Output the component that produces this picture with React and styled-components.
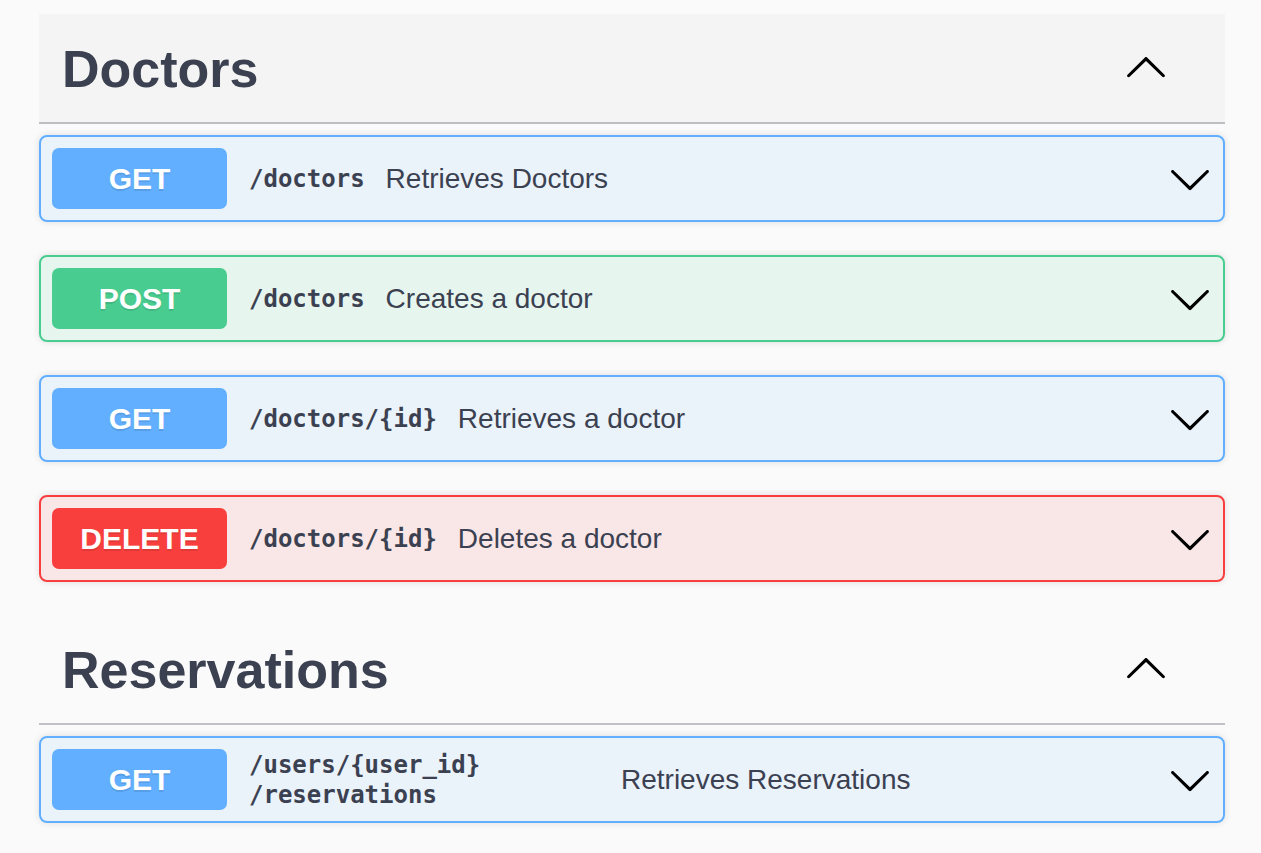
import React from "react";
import styled, { createGlobalStyle } from "styled-components";

const GlobalStyle = createGlobalStyle`
  html, body {
    margin: 0;
    padding: 0;
    background: #fafafa;
  }
  body {
    font-family: "Liberation Sans", Arial, sans-serif;
    color: #3b4151;
  }
`;

const methodColors = {
  GET: { main: "#61affe", bg: "rgba(97, 175, 254, 0.1)" },
  POST: { main: "#49cc90", bg: "rgba(73, 204, 144, 0.1)" },
  DELETE: { main: "#f93e3e", bg: "rgba(249, 62, 62, 0.1)" },
};

const Wrapper = styled.div`
  padding: 14px 36px 0 39px;
`;

const TagSection = styled.section`
  & + & {
    margin-top: 1px;
  }
`;

const TagHeader = styled.div`
  display: flex;
  align-items: center;
  height: 66px;
  padding: 22px 57px 20px 23px;
  border-bottom: 2px solid rgba(59, 65, 81, 0.3);
  background: ${(p) => (p.$hover ? "#f4f4f4" : "transparent")};
  margin-bottom: 11px;
`;

const TagTitle = styled.h3`
  flex: 1;
  margin: 0;
  font-size: 52px;
  font-weight: 700;
  line-height: 66px;
  color: #3b4151;
`;

const ArrowButton = styled.button`
  display: flex;
  align-items: center;
  justify-content: center;
  border: none;
  background: none;
  padding: 0;
  cursor: pointer;
  margin-top: ${(p) => p.$offset || 0}px;
`;

const Opblock = styled.div`
  display: flex;
  align-items: center;
  padding: 11px;
  margin-bottom: 33px;
  border: 2px solid ${(p) => methodColors[p.$method].main};
  border-radius: 8px;
  background: ${(p) => methodColors[p.$method].bg};
  box-shadow: 0 0 7px rgba(0, 0, 0, 0.12);
`;

const Method = styled.span`
  flex-shrink: 0;
  width: 175px;
  height: 61px;
  display: flex;
  align-items: center;
  justify-content: center;
  border-radius: 7px;
  background: ${(p) => methodColors[p.$method].main};
  color: #fff;
  font-size: 30px;
  font-weight: 700;
  text-shadow: 0 2px 0 rgba(0, 0, 0, 0.1);
`;

const Path = styled.span`
  max-width: 351px;
  margin-left: 22px;
  font-family: "DejaVu Sans Mono", "Liberation Mono", monospace;
  font-size: 24px;
  font-weight: 700;
  line-height: 30px;
  color: #3b4151;
`;

const Summary = styled.span`
  flex: 1;
  margin-left: 21px;
  font-size: 28px;
  line-height: 34px;
  color: #3b4151;
`;

const ChevronDown = () => (
  <svg width="44" height="44" viewBox="0 0 20 20" fill="#000">
    <path d="M17.418 6.109c.272-.268.709-.268.979 0s.271.701 0 .969l-7.908 7.83c-.27.268-.707.268-.979 0l-7.908-7.830c-.27-.268-.27-.701 0-.969.271-.268.709-.268.979 0L10 13.25l7.418-7.141z" />
  </svg>
);

const ChevronUp = () => (
  <svg width="44" height="44" viewBox="0 0 20 20" fill="#000">
    <path d="M17.418 14.908c.272.268.709.268.979 0s.271-.701 0-.969l-7.908-7.83c-.27-.268-.707-.268-.979 0l-7.908 7.83c-.27.268-.27.701 0 .969.271.268.709.268.979 0L10 7.767l7.418 7.141z" />
  </svg>
);

const tags = [
  {
    name: "Doctors",
    hover: true,
    ops: [
      { method: "GET", path: "/doctors", summary: "Retrieves Doctors" },
      { method: "POST", path: "/doctors", summary: "Creates a doctor" },
      { method: "GET", path: "/doctors/{id}", summary: "Retrieves a doctor" },
      { method: "DELETE", path: "/doctors/{id}", summary: "Deletes a doctor" },
    ],
  },
  {
    name: "Reservations",
    ops: [
      {
        method: "GET",
        path: "/users/{user_id}/reservations",
        summary: "Retrieves Reservations",
      },
    ],
  },
];

// a <wbr> before each slash so long paths break there
function renderPath(path) {
  const parts = path.split("/").filter(Boolean);
  return parts.map((part, i) => (
    <React.Fragment key={i}>
      {i > 0 && <wbr />}/{part}
    </React.Fragment>
  ));
}

function Operation({ op }) {
  return (
    <Opblock $method={op.method}>
      <Method $method={op.method}>{op.method}</Method>
      <Path>{renderPath(op.path)}</Path>
      <Summary>{op.summary}</Summary>
      <ArrowButton>
        <ChevronDown />
      </ArrowButton>
    </Opblock>
  );
}

export default function App() {
  return (
    <>
      <GlobalStyle />
      <Wrapper>
        {tags.map((tag) => (
          <TagSection key={tag.name}>
            <TagHeader $hover={tag.hover}>
              <TagTitle>{tag.name}</TagTitle>
              <ArrowButton $offset={-6}>
                <ChevronUp />
              </ArrowButton>
            </TagHeader>
            {tag.ops.map((op, i) => (
              <Operation key={i} op={op} />
            ))}
          </TagSection>
        ))}
      </Wrapper>
    </>
  );
}
